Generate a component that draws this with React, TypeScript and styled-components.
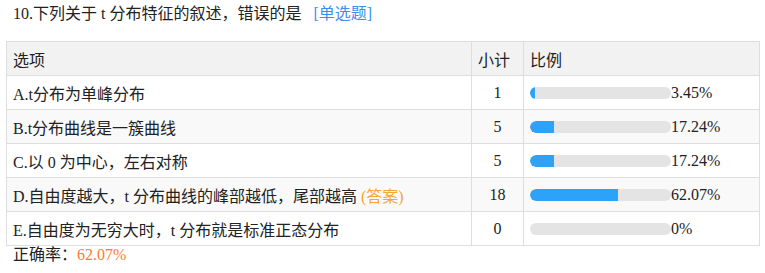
import { createGlobalStyle, styled } from "styled-components";

const Global = createGlobalStyle`
  body {
    margin: 0;
    background: #ffffff;
    font-family: "Liberation Serif", "Noto Sans CJK SC", serif;
    color: #222222;
  }
`

const Page = styled.div`
  padding: 0 6px;
  width: 753px;
`

const Title = styled.div`
  padding: 3px 0 0 7px;
  height: 41px;
  line-height: 22px;
  font-size: 16px;
  box-sizing: border-box;
`

const Tag = styled.span`
  color: #3b8ff0;
  margin-left: 12px;
`

const Table = styled.table`
  width: 753px;
  border-collapse: collapse;
  font-size: 16px;
  table-layout: fixed;
`

const Row = styled.tr<{ $shade?: boolean }>`
  height: 34px;
  background: ${p => (p.$shade ? "#f9f9f9" : "#ffffff")};
`

const HeadRow = styled.tr`
  height: 34px;
  background: #f2f2f2;
`

const Cell = styled.td<{ $center?: boolean }>`
  border: 1px solid #dedede;
  padding: 0 6px;
  text-align: ${p => (p.$center ? "center" : "left")};
  white-space: nowrap;
`

const HeadCell = styled.th`
  border: 1px solid #dedede;
  padding: 0 6px;
  text-align: left;
  font-weight: normal;
`

const BarWrap = styled.div`
  display: flex;
  align-items: center;
`

const Track = styled.div`
  width: 141px;
  height: 12px;
  border-radius: 6px;
  background: #e4e4e4;
  overflow: hidden;
  flex-shrink: 0;
`

const Fill = styled.div`
  height: 100%;
  background: #2ca3f9;
  border-radius: 6px 0 0 6px;
`

const Answer = styled.span`
  color: #f5a634;
`

const Footer = styled.div`
  padding-left: 7px;
  line-height: 18px;
  font-size: 16px;
`

const Rate = styled.span`
  color: #ff7a2b;
`

interface Iopt {
  label: string,
  count: number,
  pct: number,
  correct?: boolean
}

const options: Iopt[] = [
  { label: "A.t分布为单峰分布", count: 1, pct: 3.45 },
  { label: "B.t分布曲线是一簇曲线", count: 5, pct: 17.24 },
  { label: "C.以 0 为中心，左右对称", count: 5, pct: 17.24 },
  { label: "D.自由度越大，t 分布曲线的峰部越低，尾部越高", count: 18, pct: 62.07, correct: true },
  { label: "E.自由度为无穷大时，t 分布就是标准正态分布", count: 0, pct: 0 },
]

const App = () => {
  return (
    <Page>
      <Global />
      <Title>
        10.下列关于 t 分布特征的叙述，错误的是<Tag>[单选题]</Tag>
      </Title>
      <Table>
        <colgroup>
          <col style={{ width: 465 }} />
          <col style={{ width: 52 }} />
          <col style={{ width: 236 }} />
        </colgroup>
        <thead>
          <HeadRow>
            <HeadCell>选项</HeadCell>
            <HeadCell>小计</HeadCell>
            <HeadCell>比例</HeadCell>
          </HeadRow>
        </thead>
        <tbody>
          {options.map((o, i) => (
            <Row key={o.label} $shade={i % 2 === 1}>
              <Cell>
                {o.label}
                {o.correct && <Answer> (答案)</Answer>}
              </Cell>
              <Cell $center>{o.count}</Cell>
              <Cell>
                <BarWrap>
                  <Track>
                    <Fill style={{ width: `${o.pct}%` }} />
                  </Track>
                  <span>{o.pct === 0 ? "0" : o.pct.toFixed(2)}%</span>
                </BarWrap>
              </Cell>
            </Row>
          ))}
        </tbody>
      </Table>
      <Footer>
        正确率：<Rate>62.07%</Rate>
      </Footer>
    </Page>
  )
}

export default App;
